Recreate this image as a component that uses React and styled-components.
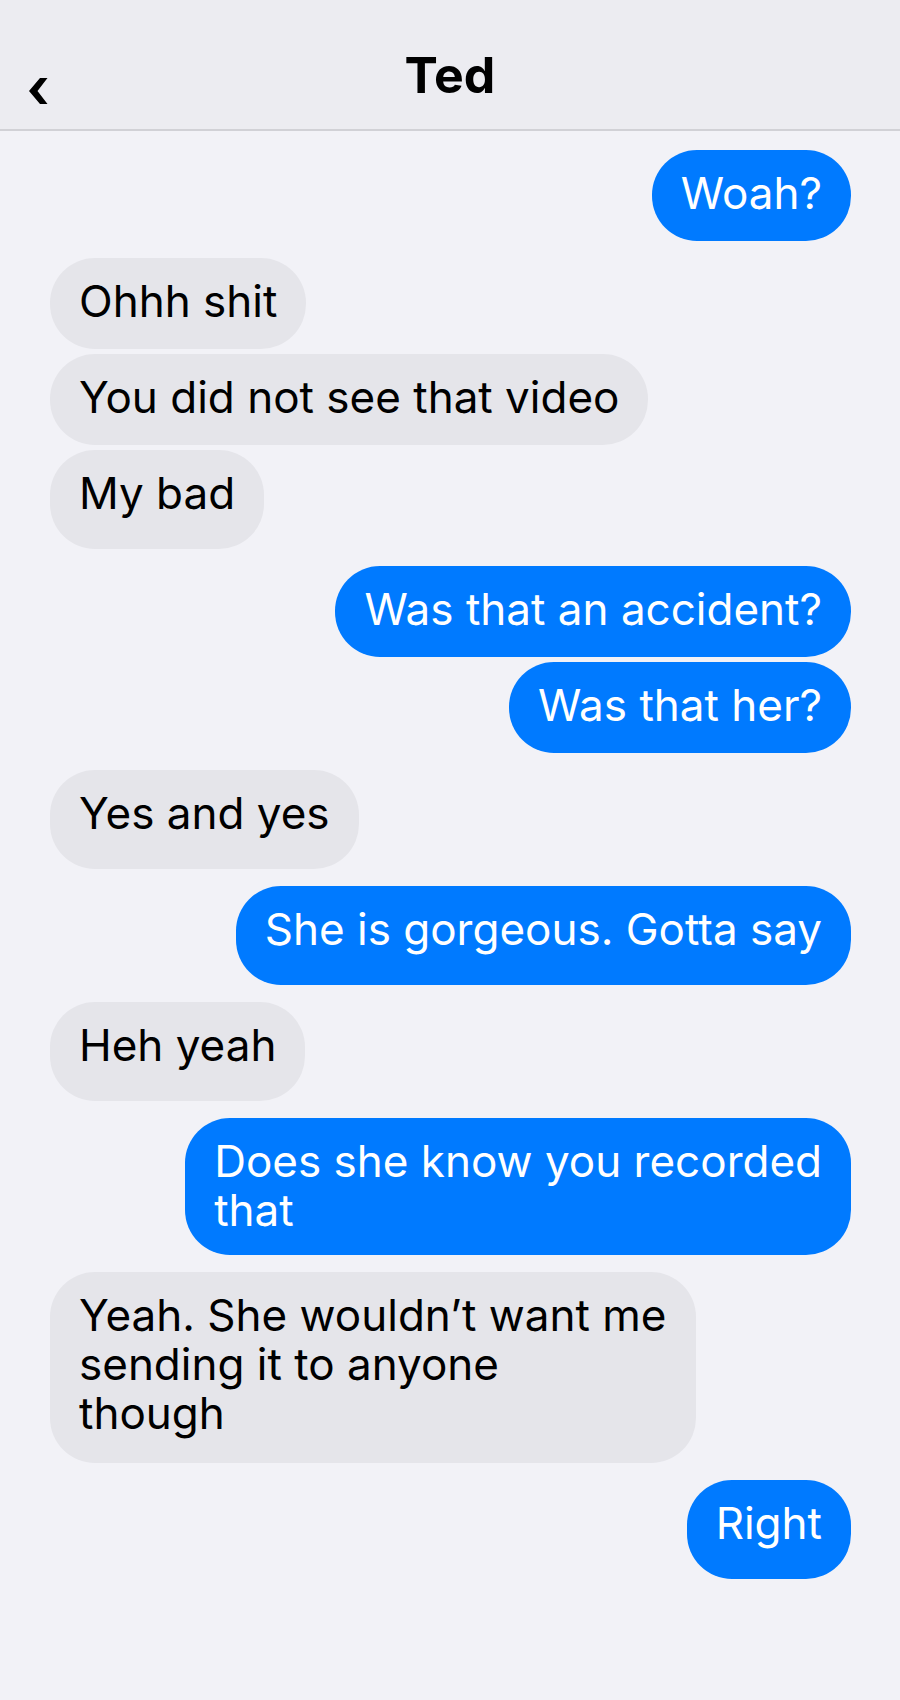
import React from "react";
import styled, { createGlobalStyle } from "styled-components";

const GlobalStyle = createGlobalStyle`
  html, body {
    margin: 0;
    padding: 0;
    background: #f2f2f7;
  }
  body {
    font-family: Inter, "Noto Sans", "Liberation Sans", sans-serif;
    -webkit-font-smoothing: antialiased;
  }
`;

const Screen = styled.div`
  min-height: 1700px;
  background: #f2f2f7;
  display: flex;
  flex-direction: column;
`;

const Header = styled.header`
  height: 131px;
  box-sizing: border-box;
  padding-top: 45px;
  background: #ececf1;
  border-bottom: 2px solid #d1d1d6;
  display: grid;
  grid-template-columns: 1fr auto 1fr;
  align-items: start;
`;

const BackButton = styled.button`
  justify-self: start;
  margin: 33px 0 0 29px;
  padding: 0;
  border: none;
  background: transparent;
  width: 19px;
  height: 26px;
  display: flex;
  cursor: pointer;
`;

const Title = styled.h1`
  margin: 0;
  font-size: 50px;
  line-height: 60px;
  font-weight: 700;
  color: #000;
`;

const Thread = styled.main`
  display: flex;
  flex-direction: column;
  gap: 17px;
  padding: 19px 49px 0 50px;
`;

const Group = styled.div`
  display: flex;
  flex-direction: column;
  gap: 5px;
  align-items: ${(p) => (p.$mine ? "flex-end" : "flex-start")};
`;

const Bubble = styled.div`
  box-sizing: border-box;
  max-width: 680px;
  padding: 19px 29px ${(p) => p.$bottom}px 29px;
  border-radius: 45px;
  font-size: 44px;
  line-height: 49px;
  font-weight: 400;
  white-space: pre-line;
  background: ${(p) => (p.$mine ? "#007aff" : "#e5e5ea")};
  color: ${(p) => (p.$mine ? "#ffffff" : "#000000")};
`;

const groups = [
  { mine: true, messages: ["Woah?"] },
  { mine: false, messages: ["Ohhh shit", "You did not see that video", "My bad"] },
  { mine: true, messages: ["Was that an accident?", "Was that her?"] },
  { mine: false, messages: ["Yes and yes"] },
  { mine: true, messages: ["She is gorgeous. Gotta say"] },
  { mine: false, messages: ["Heh yeah"] },
  { mine: true, messages: ["Does she know you recorded\nthat"] },
  { mine: false, messages: ["Yeah. She wouldn\u2019t want me\nsending it to anyone\nthough"] },
  { mine: true, messages: ["Right"] },
];

function bottomPad(text) {
  const lines = text.split("\n");
  const desc = /[gjpqy]/.test(lines[lines.length - 1]);
  if (lines.length > 1) return desc ? 25 : 20;
  return desc ? 31 : 23;
}

function Chevron() {
  return (
    <svg width="19" height="26" viewBox="0 0 19 26" aria-hidden="true">
      <polygon points="11,0 18.5,0 8.5,13 18.5,26 11,26 0,13" fill="#000" />
    </svg>
  );
}

export default function App() {
  return (
    <Screen>
      <GlobalStyle />
      <Header>
        <BackButton aria-label="Back">
          <Chevron />
        </BackButton>
        <Title>Ted</Title>
        <span />
      </Header>
      <Thread>
        {groups.map((g, i) => (
          <Group key={i} $mine={g.mine}>
            {g.messages.map((m, j) => (
              <Bubble key={j} $mine={g.mine} $bottom={bottomPad(m)}>
                {m}
              </Bubble>
            ))}
          </Group>
        ))}
      </Thread>
    </Screen>
  );
}
